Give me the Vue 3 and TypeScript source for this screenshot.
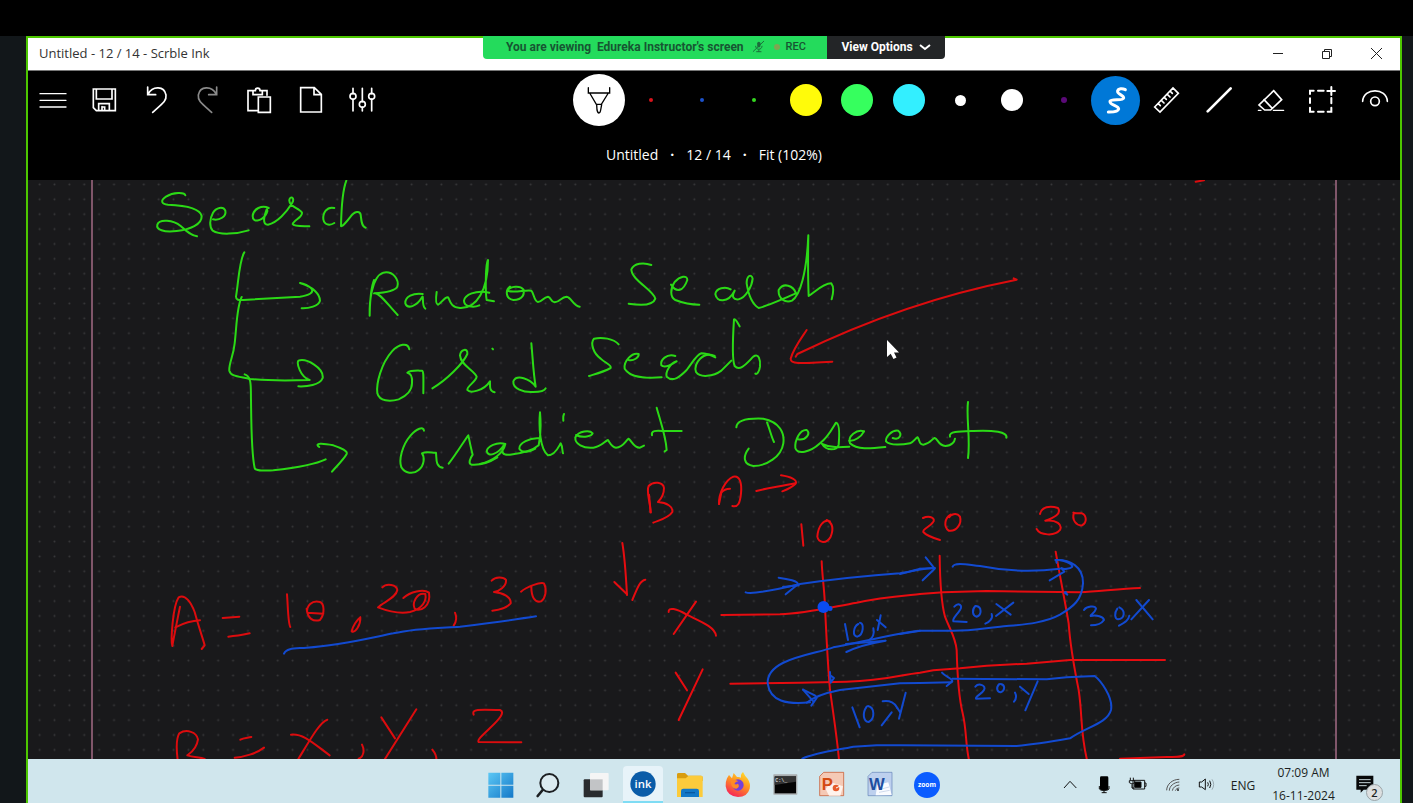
<script setup lang="ts">
interface Layer { x: number; y: number; color: string; strokes: string[] }

const green = '#2bd916'
const red = '#dc0c0e'
const blue = '#124ad0'

const swatches = [
  { name: 'Red pen', color: '#d8141c', kind: 'tiny' },
  { name: 'Blue pen', color: '#1c52cc', kind: 'tiny' },
  { name: 'Green pen', color: '#35d820', kind: 'tiny' },
  { name: 'Yellow highlighter', color: '#fffb0a', kind: 'big' },
  { name: 'Green highlighter', color: '#36ff5e', kind: 'big' },
  { name: 'Cyan highlighter', color: '#33efff', kind: 'big' },
  { name: 'White pen', color: '#ffffff', kind: 'small' },
  { name: 'White marker', color: '#ffffff', kind: 'medium' },
  { name: 'Purple pen', color: '#5b0a78', kind: 'dot' },
]

const layers: Layer[] = [
  {
    x: 140, y: 180, color: green, strokes: [
      'M136 46C134 36 100 36 78 50C60 62 64 72 84 74C130 76 180 84 185 108C186 134 150 148 110 153C70 158 48 148 52 134C58 116 100 120 122 138C140 154 152 166 171 169',
      'M219 118C238 122 260 110 256 92C250 78 228 82 219 98C208 118 208 140 218 152C240 166 290 162 326 151',
      'M386 84C366 74 340 86 338 108C338 130 364 122 376 106C382 98 384 90 380 88C372 110 366 134 384 134C412 128 440 96 456 70C466 52 450 46 448 60C446 80 478 84 486 98C488 112 462 120 458 132C462 140 490 138 508 139',
      'M583 84C560 78 548 100 550 118C554 138 572 136 583 129',
      'M619 2C608 30 604 90 603 138C604 142 618 128 630 112C644 92 660 92 662 104C664 120 664 140 677 143',
      'M313 217C298 240 296 300 288 350C288 360 296 361 310 360L480 350C508 346 520 338 516 328C508 316 490 310 480 309C520 320 540 344 540 362C536 378 506 386 485 385',
      'M305 351C290 380 290 440 284 490C280 530 266 550 268 572C272 588 290 588 330 597C380 602 450 602 509 600C480 590 470 550 475 542C500 534 552 564 548 594C540 616 500 620 475 619',
      'M314 583C336 590 332 620 333 660C334 740 334 820 344 864C346 874 370 872 400 871C460 864 520 856 557 838',
      'M538 801C520 788 550 790 580 796C605 804 624 814 620 822C610 840 588 860 576 875',
      'M702 300C690 330 690 370 689 407C688 370 694 290 730 278C760 272 778 300 772 320C764 334 730 338 702 340C716 334 740 370 773 405',
      'M848 342C820 338 794 350 796 370C802 388 830 380 846 352C852 340 844 380 856 386',
      'M890 336C888 350 886 372 894 374C902 372 914 350 924 352C930 356 928 382 960 384C1010 386 1044 330 1044 240C1036 250 1036 340 1040 360L1062 364',
      'M1048 338C1006 328 974 346 972 362C972 380 1000 384 1018 376',
      'M808 508C804 486 776 492 756 514C724 550 708 610 712 640C718 664 750 666 776 658C800 648 816 630 816 610C818 590 812 580 802 578C812 570 832 572 846 572C852 574 850 600 850 640',
      'M877 625C920 600 970 550 982 522C984 502 962 508 960 526C962 556 1000 568 1010 590C1008 606 980 618 982 630C990 640 1030 634 1050 604C1050 620 1048 634 1064 637',
      'M1057 506L1059 508',
      'M852 752C850 738 830 746 812 766C786 796 776 840 784 862C794 880 820 884 836 870C854 856 854 830 846 820C860 812 880 820 888 818C890 836 886 860 908 863',
      'M926 851C950 820 974 780 985 766C990 790 994 810 998 824C990 836 984 850 994 854C1020 856 1050 846 1072 832',
    ],
  },
  {
    x: 480, y: 220, color: green, strokes: [
      'M90 200C76 210 76 236 100 240C130 240 134 220 130 208C120 196 92 198 82 212C100 220 140 208 154 212C162 220 162 244 174 246C186 246 190 232 204 230C214 232 212 246 224 247C240 246 244 230 260 230C274 232 280 258 299 260',
      'M514 135C490 126 462 130 454 148C454 180 520 210 526 236C520 254 490 258 446 251',
      'M573 194C590 220 610 214 622 180C622 164 600 168 584 186C570 206 570 232 586 240C606 248 630 254 658 254',
      'M752 208C736 198 708 204 706 222C710 248 744 250 764 212C754 230 760 240 776 238C796 234 816 200 818 176C814 160 800 166 800 190C806 230 820 254 836 264C870 256 900 240 948 220',
      'M948 220C940 196 910 186 896 210C894 236 916 250 936 242C960 226 980 160 985 46C984 100 984 180 986 228C1004 216 1030 190 1054 190C1062 200 1060 220 1055 238',
      'M154 370C158 410 160 460 167 500C150 476 110 462 100 484C98 506 130 518 160 516C180 516 194 512 197 505',
      'M416 373C400 356 366 350 342 356C330 370 340 400 362 416C376 430 396 434 392 444C370 456 346 462 327 468',
      'M446 420C460 424 478 412 476 402C456 396 430 424 434 446C450 472 490 476 545 472',
      'M586 408C560 400 540 420 544 436C556 448 580 430 590 424C570 430 556 456 560 470C580 488 600 470 620 450C640 424 650 404 664 400C680 400 694 406 706 412',
      'M704 408C670 392 640 430 648 456C660 474 700 470 724 452L754 422',
      'M779 319C774 312 768 296 762 298C758 360 756 420 764 438C780 456 800 430 820 410C836 398 842 420 840 440C838 456 830 464 826 461',
      'M0 732C40 722 70 700 76 672C50 664 22 680 20 694C24 712 54 704 74 672C60 700 70 706 90 704C130 700 160 690 176 676C184 640 182 600 180 577C176 620 180 690 204 706C226 706 236 680 242 670C248 680 246 690 249 700',
      'M178 655C150 652 116 670 118 686C126 700 150 696 166 686',
      'M252 582C248 590 250 594 250 602',
      'M288 645C310 656 336 648 338 640C330 630 296 632 286 652C284 672 310 686 340 683C364 680 374 664 384 660C392 672 396 682 408 683C430 682 436 662 446 656C456 664 462 684 480 683L492 677',
      'M530 563C540 600 558 650 560 690L554 694',
      'M516 646C512 630 530 632 550 633L605 633',
      'M769 622C770 600 800 594 850 596C900 606 914 640 910 670C904 710 860 738 820 738C790 734 788 710 806 686',
      'M861 607C870 630 874 650 882 666',
    ],
  },
  {
    x: 760, y: 250, color: green, strokes: [
      'M114 568C140 572 152 550 140 540C120 538 104 570 106 594C112 614 150 608 180 580C206 560 220 530 228 518C240 520 238 560 236 584C232 602 200 604 186 582C210 594 240 592 268 590',
      'M312 544C290 536 262 560 270 580C290 600 330 596 376 591',
      'M268 572C284 574 304 560 312 544',
      'M398 564C420 572 428 552 414 542C396 540 376 560 378 574C390 588 430 584 450 580C464 574 466 564 473 562C480 570 476 584 490 584C510 582 516 566 524 564C534 566 534 586 556 588C576 588 584 574 585 566',
      'M624 456C618 500 632 570 624 624',
      'M570 560C564 544 600 544 640 543C700 540 744 546 739 563',
    ],
  },
  {
    x: 760, y: 250, color: red, strokes: [
      'M761 85L770 89C560 130 330 206 112 312L107 320',
      'M140 240C120 270 100 296 92 326C92 342 110 341 217 335',
    ],
  },
  { x: 930, y: 30, color: red, strokes: ['M797 455L822 451'] },
  {
    x: 140, y: 540, color: red, strokes: [
      'M120 200C112 240 100 300 97 318C92 300 98 200 116 172C136 160 154 190 164 216C176 260 190 300 194 316L185 327',
      'M106 262C130 250 160 242 180 241',
      'M248 234L298 230', 'M265 290C290 288 310 284 329 280',
      'M441 163C444 200 444 250 451 261',
      'M500 206C502 236 520 246 540 240C556 220 552 190 540 186C516 178 498 200 502 218L550 221',
      'M661 232C650 240 638 260 635 274C646 280 662 256 661 232',
      'M727 142C740 128 770 134 772 150C768 174 730 186 714 202C740 212 780 222 810 216C850 206 860 180 856 162C830 156 816 190 824 206C840 216 874 200 867 158C850 146 810 156 790 174',
      'M945 218C952 234 950 244 941 257',
      'M1055 122C1066 110 1090 110 1098 120C1100 140 1076 154 1062 156C1090 158 1114 172 1112 190C1100 204 1076 210 1057 212',
      'M1143 155C1160 140 1200 126 1212 130C1222 150 1216 174 1204 184C1184 190 1174 170 1174 140',
      'M113 660C108 620 108 596 118 580C140 566 170 576 174 598C170 628 150 640 142 646C160 652 180 652 194 657',
      'M301 599C310 594 320 594 334 591', 'M284 653C310 652 350 640 372 623',
      'M453 584C490 580 520 610 569 646', 'M562 539C540 545 510 600 472 662',
      'M666 614C674 630 672 650 656 656',
      'M724 532L765 595', 'M829 508L733 660',
      'M877 629C886 640 890 650 889 660',
      'M1001 524C994 506 1020 508 1080 510C1096 516 1080 536 1050 564C1030 584 1010 600 1016 606L1144 607',
    ],
  },
  { x: 140, y: 540, color: blue, strokes: ['M432 341C440 322 470 326 500 323C600 316 680 296 760 280C830 264 900 264 960 260C1040 250 1120 240 1188 229'] },
  {
    x: 600, y: 460, color: '#e60c10', strokes: [
      'M152 157C150 120 138 96 146 78C160 62 190 66 192 84C192 106 180 120 174 126C200 128 220 140 217 156C206 174 180 180 160 188',
      'M152 157L147 104',
      'M357 132C356 100 376 60 400 50C420 46 426 70 423 100C420 130 414 142 397 138', 'M357 132L364 98C370 90 380 86 390 86',
      'M469 93C500 84 540 80 586 70', 'M543 46C570 50 596 60 586 72C576 82 562 88 547 94',
      'M604 193L610 257', 'M690 184C670 176 654 200 652 230C656 250 680 252 692 230C700 210 700 190 680 180',
      'M67 249C74 290 78 350 81 405', 'M43 366L81 403', 'M136 359C118 362 110 390 97 420',
      'M206 456C204 440 230 446 260 464C300 484 344 500 348 527', 'M288 425L221 522',
      'M364 465L540 463C620 460 700 440 770 428C840 412 900 408 960 402L1030 397L1160 393L1440 397C1500 394 1560 386 1620 384',
      'M227 638L261 691', 'M308 628L236 780',
      'M391 671L600 668L740 665C860 662 900 644 960 638L1000 631L1080 625L1160 617L1280 611L1410 600L1695 600',
      'M665 304C666 340 672 380 674 420C678 500 682 600 690 690C700 760 712 840 717 900',
    ],
  },
  {
    x: 900, y: 490, color: '#e60c10', strokes: [
      'M119 197C120 280 124 340 135 380C150 420 166 440 170 480C172 560 176 620 188 670C200 720 196 760 207 810',
      'M467 185C480 260 498 350 506 400C510 460 520 520 536 600C548 680 540 720 561 810',
      'M660 806L800 801C830 800 850 802 853 793',
      'M69 84C90 74 110 86 98 98C90 110 66 118 70 126C80 138 100 144 120 150',
      'M152 74C134 84 130 110 146 122C170 126 186 100 180 80C170 66 150 74 148 82',
      'M420 72C424 50 450 46 474 54C486 72 460 84 436 92C470 88 488 104 480 120C464 140 420 136 410 117',
      'M522 68C514 90 530 108 546 106C562 98 560 76 546 70C536 68 526 72 520 68',
    ],
  },
  {
    x: 600, y: 460, color: blue, strokes: [
      'M437 397C450 402 500 396 600 372C700 358 760 350 900 340C930 336 945 330 960 326',
      'M536 353C560 356 600 364 592 374L557 403', 'M549 381L596 376',
      'M960 512C880 520 760 552 700 562C640 584 500 596 503 670C510 724 560 734 630 727',
      'M609 689C630 700 652 706 650 714L634 737', 'M609 689L640 724', 'M620 728C640 712 680 698 720 690L900 670L960 669L1055 667',
      'M735 492L744 540', 'M775 492C760 500 756 530 772 530C792 524 792 490 780 488',
      'M820 505C824 520 818 534 810 538', 'M831 480L857 502', 'M842 466L833 510',
      'M738 552L857 542C810 550 770 560 739 576',
      'M757 742L779 802', 'M800 740C786 760 790 784 806 786C826 776 824 742 804 738',
      'M848 724C870 720 886 730 892 744', 'M875 757L845 796', 'M892 744L900 756', 'M917 698L897 776',
      'M690 636L692 668L702 654L694 648',
    ],
  },
  {
    x: 900, y: 490, color: blue, strokes: [
      'M60 236L104 234', 'M0 252C30 244 60 236 104 234', 'M77 202L104 236L68 271',
      'M158 230C164 214 210 226 240 228C310 242 390 248 480 236',
      'M470 218C460 200 516 216 517 230C510 236 492 240 484 234L493 245L449 271',
      'M466 210C510 208 550 230 549 280C546 330 520 350 480 374C430 402 360 404 300 410C240 416 220 422 160 422L60 422L0 432',
      'M126 548C136 560 158 566 157 574L140 588',
      'M157 566L440 568L500 562L584 558C600 570 640 620 633 660C622 700 560 710 510 745C460 754 400 764 350 768L0 766L-70 766L-140 770C-200 782 -260 790 -293 806',
      'M163 350C176 336 190 346 180 360C170 376 156 386 160 394L200 396', 'M226 348C214 360 218 378 230 380C246 376 246 350 228 348',
      'M275 372C280 385 268 396 256 401', 'M289 342L332 374', 'M340 338L288 378',
      'M552 360C560 348 586 346 588 356C584 370 570 376 572 378C590 374 610 380 612 390C604 402 590 406 573 406',
      'M652 356C642 370 644 386 654 388C674 386 678 362 658 352', 'M688 377C686 390 676 396 657 407', 'M709 330L758 388', 'M747 330L694 388',
      'M226 590C236 578 260 586 252 600C246 612 224 620 228 626L270 625', 'M298 582C286 594 292 606 302 607C316 602 316 584 302 582',
      'M345 608C350 618 348 628 342 635', 'M360 590L386 612', 'M413 574L376 661', 'M494 308L502 314L497 306',
    ],
  },
]
</script>

<template>
  <div class="screen">
    <div class="frame">
      <div class="share">
        <div class="viewing">
          <span>You are viewing&nbsp; Edureka Instructor's screen</span>
          <svg class="mute" viewBox="844 32 40 40" fill="none" stroke="#1d6b3c" stroke-width="3"><rect x="860" y="37" width="10" height="18" rx="5" fill="#1d6b3c" stroke="none" /><path d="M855 50C856 64 874 64 875 50M865 61V68M857 68H873M847 68L881 35" /></svg>
          <i class="rec-dot"></i><span class="rec">REC</span>
        </div>
        <button class="options">View Options
          <svg width="12" height="8" viewBox="0 0 12 8" fill="none" stroke="#fff" stroke-width="2"><path d="M1 2L6 6L11 2" /></svg>
        </button>
      </div>

      <header class="titlebar">
        <span class="title">Untitled - 12 / 14 - Scrble Ink</span>
        <div class="controls">
          <button aria-label="Minimize"><svg viewBox="0 0 16 16"><path d="M3 7.500H13" /></svg></button>
          <button aria-label="Restore"><svg viewBox="0 0 16 16"><path d="M3.500 5.500H10.500V12.500H3.500ZM5.500 5.500V3.500H12.500V10.500H10.500" /></svg></button>
          <button aria-label="Close"><svg viewBox="0 0 16 16"><path d="M3 2L14 13M14 2L3 13" /></svg></button>
        </div>
      </header>

      <section class="toolbar">
        <div class="tools">
          <div class="group file">
            <button aria-label="Menu"><svg class="ic" viewBox="110 162 96 96"><path d="M119 191H197M119 211H197M119 231H197" stroke-width="4" /></svg></button>
            <button aria-label="Save"><svg class="ic" viewBox="264 162 96 96"><path d="M280 177H346V242H289L280 233ZM289 177V207H336V177M296 242V221H328V242M306 230V242M306 231H314V242" /></svg></button>
            <button aria-label="Undo"><svg class="ic" viewBox="417 162 96 96"><path d="M440 171V194H464M441 193C455 166 490 168 495 195C497 212 488 218 455 247" /></svg></button>
            <button aria-label="Redo" class="dim"><svg class="ic" viewBox="573 162 96 96"><path d="M650 171V194H626M649 193C635 166 600 168 595 195C593 212 602 218 635 247" /></svg></button>
            <button aria-label="Paste"><svg class="ic" viewBox="728 162 96 96"><path d="M774 242H743V182H758M786 182H800V196M758 194V182H765C765 172 779 172 779 182H786V194ZM774 201H810V247H774Z" /></svg></button>
            <button aria-label="New page"><svg class="ic" viewBox="882 162 96 96"><path d="M899 173H940L961 193V246H899ZM939 173V194H961" /></svg></button>
            <button aria-label="Settings"><svg class="ic" viewBox="1038 162 96 96"><path d="M1059 175V191M1059 207V243M1087 175V215M1087 231V243M1115 175V191M1115 207V243" /><circle cx="1059" cy="199" r="9" /><circle cx="1087" cy="223" r="9" /><circle cx="1115" cy="199" r="9" /></svg></button>
          </div>
          <div class="group pens">
            <button aria-label="Pen"><span class="pen"><svg class="ic black" viewBox="345 162 96 96"><path d="M361 173V189H425V173M365 189L385 223H400L421 189M386 224L387 240C390 252 396 252 398 240L401 224" /></svg></span></button>
            <button v-for="s in swatches" :key="s.name" :aria-label="s.name"><i :class="['swatch', s.kind]" :style="{ background: s.color }"></i></button>
            <button aria-label="Freehand"><span class="free"><svg class="ic" viewBox="511 160 96 96"><path d="M587 177C578 172 566 173 564 181C561 191 582 192 582 202C580 212 544 203 541 212C540 224 567 224 567 235C565 245 548 244 536 244" stroke-width="9" /></svg></span></button>
            <button aria-label="Ruler"><svg class="ic" viewBox="665 162 96 96"><path d="M676 231L731 174L747 190L692 246ZM687 221L693 227M696 211L704 219M705 202L711 208M714 193L722 201M723 184L729 190" /></svg></button>
            <button aria-label="Line"><svg class="ic" viewBox="822 162 96 96"><path d="M836 244L905 175" stroke-width="8" /></svg></button>
            <button aria-label="Eraser"><svg class="ic" viewBox="977 162 96 96"><path d="M1033 182L1057 209L1024 240H1006L989 225ZM1004 209L1029 235" /><path d="M1032 241H1063M987 241H995" stroke-width="4" /></svg></button>
            <button aria-label="Select"><svg class="ic" viewBox="1131 162 96 96"><path d="M1143 192V182H1154M1167 182H1184M1143 205V219M1143 233V245H1154M1167 245H1184M1196 245H1207V233M1207 204V220M1207 171V195M1195 183H1218" stroke-width="6" /></svg></button>
            <button aria-label="View"><svg class="ic" viewBox="1286 162 96 96"><path d="M1300 214C1302 172 1372 172 1374 214" /><circle cx="1337" cy="214" r="13" /></svg></button>
          </div>
        </div>
        <div class="status"><span>Untitled</span><b>·</b><span>12 / 14</span><b>·</b><span>Fit (102%)</span></div>
      </section>

      <main class="canvas">
        <svg viewBox="28 180 1372 579" preserveAspectRatio="xMidYMin slice" role="img" aria-label="Ink page">
          <defs>
            <pattern id="dots" x="32.200" y="177" width="14.880" height="14.880" patternUnits="userSpaceOnUse"><circle cx="7.440" cy="7.440" r="1" fill="#38383a" /></pattern>
          </defs>
          <rect x="28" y="180" width="1372" height="579" fill="url(#dots)" />
          <path d="M92 180V759M1336 180V759" stroke="#80566a" stroke-width="2" />
          <g v-for="(l, i) in layers" :key="i" :transform="`translate(${l.x} ${l.y}) scale(0.33333)`" :stroke="l.color" class="ink">
            <path v-for="d in l.strokes" :key="d" :d="d" />
          </g>
          <g fill="#0a4cf0"><circle cx="823.500" cy="607" r="6" /><circle cx="830" cy="608.500" r="2.500" /></g>
          <path d="M887 340V357L890.700 353.700L893.500 359L896.500 357.500L894 352.500H899Z" fill="#fff" />
        </svg>
      </main>

      <footer class="taskbar">
        <nav class="apps">
          <button aria-label="Start"><svg viewBox="44 44 96 96"><defs><linearGradient id="win" x1="0" y1="0" x2="1" y2="1"><stop offset="0" stop-color="#5cc8f5" /><stop offset="1" stop-color="#1478c8" /></linearGradient></defs><path d="M54 55H90V91H54ZM93 55H129V91H93ZM54 94H90V130H54ZM93 94H129V130H93Z" fill="url(#win)" /></svg></button>
          <button aria-label="Search"><svg viewBox="188 44 96 96" fill="none" stroke="#1c1f22" stroke-linecap="round"><circle cx="240" cy="86" r="27" stroke-width="6" fill="#dcebf0" /><path d="M220 107L205 125" stroke-width="8" /></svg></button>
          <button aria-label="Task view"><svg viewBox="328 44 96 96"><rect x="339" y="75" width="57" height="54" rx="3" fill="#292b2e" /><rect x="358" y="56" width="56" height="52" rx="3" fill="#f5f5f5" /><path d="M358 75H396V108H358Z" fill="#c2c4c6" /></svg></button>
          <button aria-label="Scrble Ink" class="active"><svg viewBox="470 44 96 96"><circle cx="518" cy="92" r="38" fill="#0a5ca8" /><text x="518" y="103" text-anchor="middle" class="inklogo">ink</text></svg></button>
          <button aria-label="File Explorer"><svg viewBox="613 44 96 96"><path d="M622 60Q622 56 627 56H646L655 64H694Q699 64 699 69V80H622Z" fill="#d99d10" /><path d="M622 72H648L657 64H695Q699 64 699 69V128H622Z" fill="#fccb3b" /><path d="M634 128V110Q634 103 641 103H681Q688 103 688 110V128Z" fill="#1278c8" /><path d="M646 115H676" stroke="#0858a0" stroke-width="4" /></svg></button>
          <button aria-label="Firefox"><svg viewBox="755 44 96 96"><defs><linearGradient id="fox" x1=".8" y1="0" x2=".3" y2="1"><stop offset="0" stop-color="#ffdf2e" /><stop offset=".45" stop-color="#ff9420" /><stop offset="1" stop-color="#f5205a" /></linearGradient></defs><path d="M770 72L776 62L785 72L790 56L800 68Q808 67 812 70Q810 60 818 53Q824 66 832 73Q842 88 838 103Q831 128 803 128Q770 126 766 96Q766 80 770 72Z" fill="url(#fox)" /><circle cx="803" cy="92" r="17" fill="#7540d8" /><path d="M780 78Q795 73 804 81Q795 82 792 89Q798 92 803 88Q810 98 798 103Q788 103 784 94Z" fill="#ff8a24" /></svg></button>
          <button aria-label="Terminal"><svg viewBox="896 44 96 96"><rect x="909" y="60" width="72" height="61" rx="2" fill="#a9adaf" /><path d="M913 66H977V117H913Z" fill="#050505" /><path d="M913 67H977V82L913 92Z" fill="#343434" /><text x="915" y="83" class="prompt">C:\_</text></svg></button>
          <button aria-label="PowerPoint"><svg viewBox="1037 44 96 96"><path d="M1060 54H1120V124H1048V66Z" fill="#f5c9b5" stroke="#c34b20" stroke-width="2" /><path d="M1066 104L1082 84L1118 96L1110 124H1076Z" fill="#fff3ec" /><circle cx="1097" cy="101" r="10" fill="#e65a2c" /><path d="M1097 101L1109 95" stroke="#fff" stroke-width="3" /><text x="1054" y="107" class="office" fill="#d44a12">P</text></svg></button>
          <button aria-label="Word"><svg viewBox="1179 44 96 96"><path d="M1203 54H1263V124H1191V66Z" fill="#bdd0ee" stroke="#6484b8" stroke-width="2" /><path d="M1219 92L1252 84L1262 122L1214 123Z" fill="#f9fbff" /><path d="M1224 106L1254 98M1224 114L1256 108" stroke="#b9c9e2" stroke-width="2" /><text x="1194" y="106" class="office" fill="#1d4e9f">W</text></svg></button>
          <button aria-label="Zoom"><svg viewBox="1322 44 96 96"><circle cx="1370" cy="92" r="39" fill="#0b5cff" /><text x="1370" y="99" text-anchor="middle" class="zoomlogo">zoom</text></svg></button>
        </nav>
        <div class="tray">
          <button aria-label="Hidden icons"><svg viewBox="70 44 96 96" class="line"><path d="M100 101L118 81L137 101" /></svg></button>
          <button aria-label="Microphone"><svg viewBox="172 44 96 96" class="line"><rect x="208" y="66" width="25" height="41" rx="4" fill="#000" stroke="none" /><path d="M206 95V104Q208 108 220 109Q233 108 235 104V95M220 108V116M213 115H228" /></svg></button>
          <button aria-label="Battery"><svg viewBox="278 44 96 96" class="line"><path d="M311 78H346V104H311ZM346 86H350V96H346M303 70V78M312 70V78M300 79H316V85Q308 93 300 85ZM308 90V101H315" /><path d="M316 83H335V99H316Z" fill="#000" /></svg></button>
          <button aria-label="Network"><svg viewBox="381 44 96 96" class="line faint"><path d="M413 108C413 90 430 75 451 75M421 109C421 96 434 84 451 83M430 109C432 99 440 93 451 92M439 109C441 104 445 101 451 101" /><circle cx="447" cy="107" r="3" fill="#222" stroke="none" /></svg></button>
          <button aria-label="Volume"><svg viewBox="480 44 96 96" class="line"><path d="M508 83H515L526 74V106L515 98H508Z" /><path d="M533 84Q537 90 533 96M539 79Q546 90 539 101" /><path d="M546 75Q556 90 546 106" stroke="#9babb2" /></svg></button>
          <button class="lang">ENG</button>
          <button class="clock"><span>07:09 AM</span><span>16-11-2024</span></button>
          <button class="notif" aria-label="Notifications"><svg viewBox="970 44 96 96"><path d="M983 64H1034V106H1005L996 115V106H983Z" fill="#08090a" /><path d="M991 76H1026M991 85H1026M991 94H1014" stroke="#c5d3d8" stroke-width="3" /></svg><span class="badge">2</span></button>
        </div>
      </footer>
    </div>
  </div>
</template>

<style>
html, body { margin: 0; background: #000; }
</style>

<style scoped>
* { box-sizing: border-box; }
button { border: 0; margin: 0; padding: 0; background: none; color: inherit; font: inherit; display: flex; align-items: center; justify-content: center; }
.screen { height: 100vh; padding: 36px 11px 0 26px; background: linear-gradient(#000 36px, #12171a 36px); font-family: "Open Sans", "Noto Sans", sans-serif; overflow: hidden; }
.frame { position: relative; height: 100%; display: flex; flex-direction: column; border: 2px solid #4dc800; border-bottom: 0; }
.share { position: absolute; z-index: 2; top: -2px; left: 50%; transform: translateX(-50%); display: flex; height: 23px; border-radius: 0 0 4px 4px; overflow: hidden; font-family: Roboto, sans-serif; font-size: 12px; font-weight: 700; white-space: nowrap; }
.viewing { width: 344px; padding: 0 0 2px 23px; background: #24db5c; color: #175532; display: flex; align-items: center; }
.mute { width: 13px; height: 13px; margin-left: 8px; }
.rec-dot { width: 6px; height: 6px; margin: 0 6px 0 9px; border-radius: 50%; background: #7fa552; }
.rec { font-size: 11px; font-weight: 500; }
.options { width: 118px; padding-bottom: 2px; gap: 6px; background: #232527; color: #fff; }
.titlebar { flex: none; display: flex; height: 33px; background: #fff; border-bottom: 1px solid #777; justify-content: space-between; align-items: center; }
.title { padding: 0 0 2px 11px; font-size: 13px; line-height: 18px; color: #333; }
.controls { display: flex; height: 100%; }
.controls button { width: 49px; }
.controls svg { width: 16px; height: 16px; fill: none; stroke: #222; }
.toolbar { flex: none; height: 109px; background: #000; color: #fff; }
.tools { height: 58px; display: flex; justify-content: space-between; }
.group { display: grid; height: 100%; }
.file { grid-template-columns: repeat(7, 1fr); width: 361px; margin-left: -1px; }
.pens { grid-template-columns: repeat(16, 1fr); width: 827px; }
.ic { width: 32px; height: 32px; fill: none; stroke: #fff; stroke-width: 5; stroke-linecap: round; flex: none; }
.dim .ic { stroke: #8a8a8a; }
.black { stroke: #000; stroke-width: 4; }
.pen, .free { display: flex; align-items: center; justify-content: center; border-radius: 50%; flex: none; }
.pen { width: 52px; height: 52px; background: #fff; }
.free { width: 49px; height: 49px; background: #0078d7; }
.swatch { border-radius: 50%; flex: none; }
.tiny { width: 4px; height: 4px; }
.dot { width: 6px; height: 6px; }
.small { width: 11px; height: 11px; }
.medium { width: 22px; height: 22px; }
.big { width: 32px; height: 32px; }
.status { height: 51px; display: flex; align-items: center; justify-content: center; gap: 12px; font-size: 14px; }
.canvas { flex: 1; min-height: 0; background: #19191b; overflow: hidden; }
.canvas svg { display: block; width: 100%; height: 100%; }
.ink { fill: none; stroke-width: 6; stroke-linecap: round; stroke-linejoin: round; }
.taskbar { flex: none; height: 44px; overflow: hidden; display: grid; grid-template-columns: 1fr auto 1fr; background: #d0e6ed; color: #1b1f22; }
.apps { grid-column: 2; width: 473px; display: grid; grid-template-columns: repeat(10, 1fr); justify-items: center; padding-top: 7px; }
.apps button { width: 40px; height: 37px; border-radius: 4px 4px 0 0; }
.apps svg, .tray svg { width: 32px; height: 32px; flex: none; }
.apps .active { background: #e7f3f9; border-bottom: 2px solid #7fdcf4; }
.inklogo { font: 600 34px "Open Sans", sans-serif; fill: #fff; }
.prompt { font: 15px "Liberation Mono", monospace; fill: #fff; }
.office { font: 700 50px "Liberation Sans", sans-serif; }
.zoomlogo { font: 700 20px "Open Sans", sans-serif; fill: #fff; }
.tray { display: flex; justify-content: flex-end; padding-right: 8px; font-size: 12px; }
.tray button { width: 34px; height: 44px; padding-top: 8px; }
.line { fill: none; stroke: #111; stroke-width: 3; }
.faint { stroke: #555; }
.tray .lang { width: 40px; }
.tray .clock { width: 81px; padding-top: 7px; gap: 9px; flex-direction: column; justify-content: flex-start; line-height: 14px; }
.tray .notif { width: 48px; position: relative; }
.badge { position: absolute; left: 22px; top: 25px; width: 17px; height: 17px; border-radius: 50%; border: 1px solid #9aa4a8; background: #dcdfe0; font-size: 11px; line-height: 15px; font-weight: 600; text-align: center; }
</style>
